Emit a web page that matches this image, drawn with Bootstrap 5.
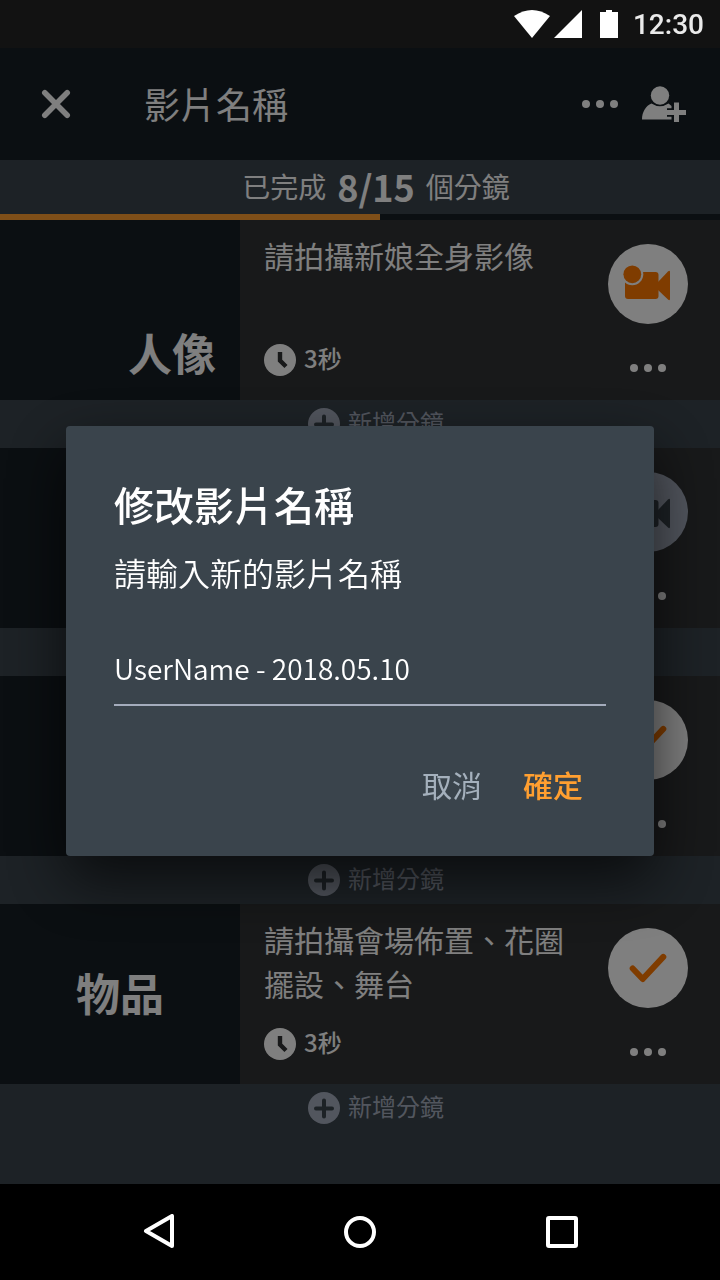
<!DOCTYPE html>
<html lang="zh-Hant">
<head>
<meta charset="utf-8">
<meta name="viewport" content="width=device-width, initial-scale=1">
<title>影片名稱</title>
<link href="https://cdn.jsdelivr.net/npm/bootstrap@5.3.0/dist/css/bootstrap.min.css" rel="stylesheet">
<style>
  :root { --slate: #3a444c; --ink: #161e24; --panel: #303234; --mist: #a4acbc; --amber: #ff9f30; --flame: #ff7800; }
  body { font-family: "Noto Sans CJK TC", sans-serif; background: var(--slate); color: #fff; }
  svg { display: block; flex: none; }
  .btn { --bs-btn-padding-x: 0; --bs-btn-padding-y: 0; --bs-btn-border-width: 0; --bs-btn-color: #fff; line-height: 1; }
  .status-bar { height: 48px; background: #121212; font: 500 28px/48px Roboto, sans-serif; color: #eaeaea; z-index: 1070; padding-right: 16px; gap: 15px; }
  .status-bar span { padding-top: 2px; }
  .app-bar { height: 112px; background: var(--ink); padding: 0 32px 0 40px; }
  .app-title { font-size: 36px; font-weight: 400; line-height: 48px; margin: 0 0 0 72px; padding-bottom: 2px; }
  .summary { height: 54px; font-size: 28px; line-height: 52px; padding: 0 0 2px 32px; gap: 11px; }
  .summary strong { font-size: 36px; font-weight: 700; }
  .progress { --bs-progress-height: 6px; --bs-progress-bg: var(--ink); --bs-progress-border-radius: 0; --bs-progress-bar-bg: var(--amber); }
  .shot { min-height: 180px; background: var(--panel); }
  .shot-kind { width: 33.3333%; background: var(--ink); font-size: 44px; font-weight: 700; line-height: 60px; padding: 14px 24px 18px; }
  .shot-body { padding: 13px 24px 24px; }
  .shot-text { font-size: 30px; line-height: 44px; margin: 0; }
  .shot-time { font-size: 24px; line-height: 28px; font-weight: 500; gap: 8px; }
  .shot-time span, .add-strip span { padding-bottom: 4px; }
  .shot-side { padding: 24px 32px 24px 0; gap: 36px; }
  .round { width: 80px; height: 80px; border-radius: 50%; background: #fff; }
  .round.idle { background: var(--mist); }
  .add-strip { min-height: 48px; padding: 8px 0 8px 32px; }
  .add-strip .btn { font-size: 24px; line-height: 28px; gap: 8px; color: var(--mist); }
  .nav-keys { height: 96px; background: #000; z-index: 1070; padding: 0 8%; }
  .modal-backdrop { --bs-backdrop-opacity: .5; }
  .modal-dialog { max-width: none; margin: 0 66px; min-height: 100%; padding-top: 2px; }
  .modal-content { background: var(--slate); color: #fff; border: 0; border-radius: 4px; padding: 48px; box-shadow: 0 24px 60px rgba(0, 0, 0, .66); }
  .modal-title { font-size: 40px; font-weight: 500; line-height: 60px; }
  .name-label { font-size: 32px; font-weight: 350; line-height: 48px; margin: 14px 0 50px; }
  .name-input, .name-input:focus { font-size: 28px; font-weight: 350; line-height: 44px; color: #fff; background: transparent; border: 0; border-bottom: 2px solid var(--mist); border-radius: 0; padding: 0 0 14px; box-shadow: none; }
  .actions { gap: 41px; padding: 54px 23px 0 0; }
  .actions .btn { font-size: 30px; line-height: 48px; }
  .actions .cancel { color: #a4b0bc; font-weight: 400; }
  .actions .confirm { color: var(--amber); font-weight: 500; }
</style>
</head>
<body>
<div class="d-flex flex-column min-vh-100">
  <div class="status-bar position-relative d-flex align-items-center justify-content-end">
    <svg width="104" height="28" viewBox="0 0 104 28" fill="#fff" aria-hidden="true"><path d="M0 6Q18-6 36 6L18 28Z"/><path d="M68 0V28H40Z"/><path d="M92 0V2H86V28H104V2H98V0Z"/></svg>
    <span>12:30</span>
  </div>

  <header class="app-bar d-flex align-items-center">
    <button class="btn" type="button" aria-label="關閉"><svg width="32" height="32" viewBox="0 0 32 32" stroke="#fff" stroke-width="5.600" stroke-linecap="round"><path d="M4.800 4.800L27.200 27.200M27.200 4.800L4.800 27.200"/></svg></button>
    <h1 class="app-title flex-grow-1">影片名稱</h1>
    <button class="btn" type="button" aria-label="更多"><svg width="36" height="16" viewBox="0 0 36 16" fill="#fff"><circle cx="4" cy="8" r="4"/><circle cx="18" cy="8" r="4"/><circle cx="32" cy="8" r="4"/></svg></button>
    <button class="btn ms-4" type="button" aria-label="新增成員"><svg width="46" height="40" viewBox="0 0 46 40" fill="#fff"><circle cx="18" cy="11.500" r="9.200"/><path d="M0 35.500C0 28 4 21.500 9.500 19.500Q18 25 26.500 19.500L29.500 22V35.500Z"/><path d="M34.500 19V38M25 28.500H44" stroke="#161e24" stroke-width="8.500"/><path d="M34.500 18.500V38M25 28.500H44" stroke="#fff" stroke-width="5"/></svg></button>
  </header>

  <div class="summary d-flex align-items-center justify-content-center"><span>已完成</span><strong>8/15</strong><span>個分鏡</span></div>
  <div class="progress" role="progressbar" aria-label="完成進度" aria-valuenow="8" aria-valuemin="0" aria-valuemax="15"><div class="progress-bar" style="width:52.8%"></div></div>

  <main class="flex-grow-1">
    <section class="shot d-flex">
      <div class="shot-kind d-flex align-items-end justify-content-end">人像</div>
      <div class="shot-body flex-grow-1 d-flex flex-column justify-content-between">
        <p class="shot-text">請拍攝新娘全身影像</p>
        <div class="shot-time d-flex align-items-center"><svg width="32" height="32" viewBox="0 0 32 32"><circle cx="16" cy="16" r="16" fill="#fff"/><path d="M16 8V16.500L22 22.500" fill="none" stroke="#303234" stroke-width="4.400"/></svg><span>3秒</span></div>
      </div>
      <div class="shot-side d-flex flex-column align-items-center">
        <button class="btn round" type="button" aria-label="拍攝"><svg width="80" height="80" viewBox="0 0 80 80" fill="#ff7800"><rect x="17" y="28" width="33.500" height="27" rx="3"/><path d="M50 38L60 27.500Q62 26 62 28V55Q62 57 60 55.500L50 46Z"/><circle cx="24.300" cy="30.300" r="11" fill="#fff"/><circle cx="24.300" cy="30.300" r="8.900"/></svg></button>
        <button class="btn" type="button" aria-label="更多"><svg width="36" height="16" viewBox="0 0 36 16" fill="#fff"><circle cx="4" cy="8" r="4"/><circle cx="18" cy="8" r="4"/><circle cx="32" cy="8" r="4"/></svg></button>
      </div>
    </section>
    <div class="add-strip d-flex justify-content-center"><button class="btn d-flex align-items-center" type="button"><svg width="32" height="32" viewBox="0 0 32 32"><circle cx="16" cy="16" r="16" fill="#a4acbc"/><path d="M16 8.500V24.500M8 16.500H24" stroke="#3a444c" stroke-width="4" stroke-linecap="round"/></svg><span>新增分鏡</span></button></div>

    <section class="shot d-flex">
      <div class="shot-kind"></div>
      <div class="shot-body flex-grow-1"></div>
      <div class="shot-side d-flex flex-column align-items-center">
        <button class="btn round idle" type="button" aria-label="拍攝"><svg width="80" height="80" viewBox="0 0 80 80" fill="#3a444c"><rect x="17" y="28" width="33.500" height="27" rx="3"/><path d="M50 38L60 27.500Q62 26 62 28V55Q62 57 60 55.500L50 46Z"/><circle cx="24.300" cy="30.300" r="11" fill="#a4acbc"/><circle cx="24.300" cy="30.300" r="8.900"/></svg></button>
        <button class="btn" type="button" aria-label="更多"><svg width="36" height="16" viewBox="0 0 36 16" fill="#fff"><circle cx="4" cy="8" r="4"/><circle cx="18" cy="8" r="4"/><circle cx="32" cy="8" r="4"/></svg></button>
      </div>
    </section>
    <div class="add-strip"></div>

    <section class="shot d-flex">
      <div class="shot-kind"></div>
      <div class="shot-body flex-grow-1"></div>
      <div class="shot-side d-flex flex-column align-items-center">
        <button class="btn round" type="button" aria-label="已完成"><svg width="80" height="80" viewBox="0 0 80 80" fill="none"><path d="M24.700 40.500L34.700 51L55.300 28.900" stroke="#ff7800" stroke-width="6" stroke-linecap="round" stroke-linejoin="round"/></svg></button>
        <button class="btn" type="button" aria-label="更多"><svg width="36" height="16" viewBox="0 0 36 16" fill="#fff"><circle cx="4" cy="8" r="4"/><circle cx="18" cy="8" r="4"/><circle cx="32" cy="8" r="4"/></svg></button>
      </div>
    </section>
    <div class="add-strip d-flex justify-content-center"><button class="btn d-flex align-items-center" type="button"><svg width="32" height="32" viewBox="0 0 32 32"><circle cx="16" cy="16" r="16" fill="#a4acbc"/><path d="M16 8.500V24.500M8 16.500H24" stroke="#3a444c" stroke-width="4" stroke-linecap="round"/></svg><span>新增分鏡</span></button></div>

    <section class="shot d-flex">
      <div class="shot-kind d-flex align-items-center justify-content-center">物品</div>
      <div class="shot-body flex-grow-1 d-flex flex-column justify-content-between">
        <p class="shot-text">請拍攝會場佈置、花圈<br>擺設、舞台</p>
        <div class="shot-time d-flex align-items-center"><svg width="32" height="32" viewBox="0 0 32 32"><circle cx="16" cy="16" r="16" fill="#fff"/><path d="M16 8V16.500L22 22.500" fill="none" stroke="#303234" stroke-width="4.400"/></svg><span>3秒</span></div>
      </div>
      <div class="shot-side d-flex flex-column align-items-center">
        <button class="btn round" type="button" aria-label="已完成"><svg width="80" height="80" viewBox="0 0 80 80" fill="none"><path d="M24.700 40.500L34.700 51L55.300 28.900" stroke="#ff7800" stroke-width="6" stroke-linecap="round" stroke-linejoin="round"/></svg></button>
        <button class="btn" type="button" aria-label="更多"><svg width="36" height="16" viewBox="0 0 36 16" fill="#fff"><circle cx="4" cy="8" r="4"/><circle cx="18" cy="8" r="4"/><circle cx="32" cy="8" r="4"/></svg></button>
      </div>
    </section>
    <div class="add-strip d-flex justify-content-center"><button class="btn d-flex align-items-center" type="button"><svg width="32" height="32" viewBox="0 0 32 32"><circle cx="16" cy="16" r="16" fill="#a4acbc"/><path d="M16 8.500V24.500M8 16.500H24" stroke="#3a444c" stroke-width="4" stroke-linecap="round"/></svg><span>新增分鏡</span></button></div>
  </main>

  <nav class="nav-keys position-relative d-flex align-items-center" aria-label="系統導覽">
    <button class="btn flex-fill d-flex justify-content-center" type="button" aria-label="返回"><svg width="36" height="36" viewBox="0 0 36 36" fill="none" stroke="#fff" stroke-width="4" stroke-linejoin="round"><path d="M6 17L32 2V32Z"/></svg></button>
    <button class="btn flex-fill d-flex justify-content-center" type="button" aria-label="主畫面"><svg width="36" height="36" viewBox="0 0 36 36" fill="none" stroke="#fff" stroke-width="4"><circle cx="18" cy="18" r="14"/></svg></button>
    <button class="btn flex-fill d-flex justify-content-center" type="button" aria-label="最近使用"><svg width="36" height="36" viewBox="0 0 36 36" fill="none" stroke="#fff" stroke-width="4"><rect x="4" y="4" width="28" height="28" rx="1"/></svg></button>
  </nav>
</div>

<div class="modal-backdrop show"></div>
<div class="modal show d-block" role="dialog" aria-modal="true" aria-labelledby="rename-title">
  <div class="modal-dialog modal-dialog-centered">
    <form class="modal-content">
      <h2 class="modal-title" id="rename-title">修改影片名稱</h2>
      <label class="name-label" for="rename-input">請輸入新的影片名稱</label>
      <input class="form-control name-input" id="rename-input" type="text" value="UserName - 2018.05.10">
      <div class="actions d-flex justify-content-end">
        <button class="btn cancel" type="button">取消</button>
        <button class="btn confirm" type="button">確定</button>
      </div>
    </form>
  </div>
</div>
<script src="https://cdn.jsdelivr.net/npm/bootstrap@5.3.0/dist/js/bootstrap.bundle.min.js"></script>
</body>
</html>
